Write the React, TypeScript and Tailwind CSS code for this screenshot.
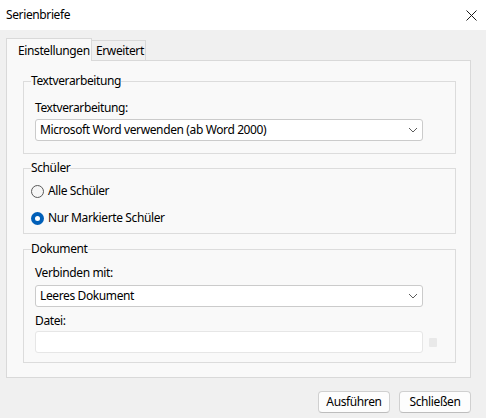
import React from 'react'

function Chevron() {
  return (
    <svg width="10" height="6" viewBox="0 0 10 6" className="text-[#5c5c5c]">
      <path d="M1 1 L5 5 L9 1" fill="none" stroke="currentColor" strokeWidth="1" />
    </svg>
  )
}

function Combo({ value }: { value: string }) {
  return (
    <div className="w-[388px] h-[22px] flex items-center justify-between bg-white border border-[#cbcbcb] rounded-[3px] pl-[4px] pr-[4px]">
      <span>{value}</span>
      <Chevron />
    </div>
  )
}

function Group({ title, children, className }: { title: string; children: React.ReactNode; className?: string }) {
  return (
    <fieldset className={'w-[433px] border border-[#dcdcdc] ' + (className || '')}>
      <legend className="ml-[7px] leading-4 px-0">{title}</legend>
      {children}
    </fieldset>
  )
}

function Radio({ label, checked }: { label: string; checked?: boolean }) {
  return (
    <div className="flex items-center h-4 gap-[4px]">
      {checked ? (
        <span className="w-[13px] h-[13px] rounded-full bg-[#005fb8] flex items-center justify-center">
          <span className="w-[5px] h-[5px] rounded-full bg-white" />
        </span>
      ) : (
        <span className="w-[13px] h-[13px] rounded-full border border-[#5a5a5a] bg-[#f6f6f6]" />
      )}
      <span>{label}</span>
    </div>
  )
}

export default function App() {
  return (
    <div className="w-[486px] h-[418px] bg-[#f0f0f0] flex flex-col font-['Noto_Sans',sans-serif] text-[12px] tracking-[-0.38px] text-black overflow-hidden">
      {/* title bar */}
      <div className="h-[30px] bg-white flex items-center justify-between pl-[6px] pr-[9px]">
        <span>Serienbriefe</span>
        <svg width="11" height="11" viewBox="0 0 11 11">
          <path d="M0.5 0.5 L10.5 10.5 M10.5 0.5 L0.5 10.5" stroke="#1a1a1a" strokeWidth="1" />
        </svg>
      </div>

      <div className="flex-1 flex flex-col pt-[8px] pl-[6px] pr-[15px]">
        {/* tabs */}
        <div className="flex items-end h-[22px]">
          <div className="relative z-10 -mb-px w-[86px] h-[23px] border border-b-0 border-[#d9d9d9] bg-[#f9f9f9] pl-[11px] pt-[3px]">
            Einstellungen
          </div>
          <div className="w-[54px] h-[20px] border border-l-0 border-b-0 border-[#d9d9d9] bg-[#f0f0f0] pl-[4px] pt-[1px]">
            Erweitert
          </div>
        </div>

        {/* tab panel */}
        <div className="h-[318px] border border-[#d9d9d9] bg-[#f9f9f9] pt-[12px] pl-[16px] pr-[14px]">
          <Group title="Textverarbeitung">
            <div className="pl-[11px] pt-[11px] pb-[12px]">
              <div className="leading-4">Textverarbeitung:</div>
              <div className="mt-[3px]">
                <Combo value="Microsoft Word verwenden (ab Word 2000)" />
              </div>
            </div>
          </Group>

          <Group title="Schüler" className="mt-[6px]">
            <div className="pl-[7px] pt-[7px] pb-[7px] flex flex-col gap-[11px]">
              <Radio label="Alle Schüler" />
              <Radio label="Nur Markierte Schüler" checked />
            </div>
          </Group>

          <Group title="Dokument" className="mt-[7px]">
            <div className="pl-[11px] pt-[8px] pb-[9px]">
              <div className="leading-4">Verbinden mit:</div>
              <div className="mt-[4px]">
                <Combo value="Leeres Dokument" />
              </div>
              <div className="leading-4 mt-[6px]">Datei:</div>
              <div className="mt-[2px] flex items-center gap-[6px]">
                <div className="w-[388px] h-[22px] bg-white border border-[#e6e6e6] rounded-[3px]" />
                <div className="w-[8px] h-[9px] bg-[#e9e9e9] rounded-[1px]" />
              </div>
            </div>
          </Group>
        </div>

        {/* buttons */}
        <div className="flex justify-end gap-[9px] mt-[13px]">
          <button className="w-[72px] h-[22px] bg-[#fdfdfd] border border-[#d0d0d0] border-b-[#bdbdbd] rounded-[4px]">
            Ausführen
          </button>
          <button className="w-[72px] h-[22px] bg-[#fdfdfd] border border-[#d0d0d0] border-b-[#bdbdbd] rounded-[4px]">
            Schließen
          </button>
        </div>
      </div>
    </div>
  )
}
